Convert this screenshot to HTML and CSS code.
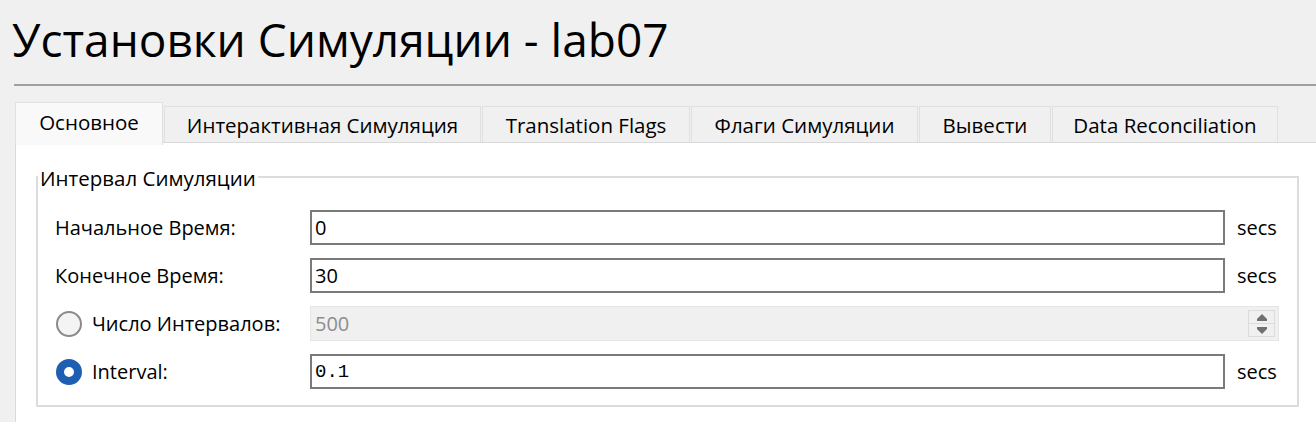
FILE: index.html
```html
<!DOCTYPE html>
<html>
<head>
<meta charset="utf-8">
<link rel="stylesheet" href="styles.css">
</head>
<body>
<div class="title">Установки Симуляции - lab07</div>
<div class="rule"></div>
<div class="tabs">
  <div class="tab active">Основное</div>
  <div class="tab w2">Интерактивная Симуляция</div>
  <div class="tab w3">Translation Flags</div>
  <div class="tab w4">Флаги Симуляции</div>
  <div class="tab w5">Вывести</div>
  <div class="tab w6">Data Reconciliation</div>
</div>
<div class="pane">
  <div class="group">
    <div class="caption">Интервал Симуляции</div>
    <div class="grid">
      <div class="label">Начальное Время:</div>
      <div class="input">0</div>
      <div class="unit">secs</div>

      <div class="label">Конечное Время:</div>
      <div class="input">30</div>
      <div class="unit">secs</div>

      <div class="label"><span class="radio"></span>Число Интервалов:</div>
      <div class="spin"><span class="spinval">500</span>
        <div class="spinbtns">
          <div class="sb"><svg width="12" height="7" viewBox="0 0 12 7"><path d="M6 0 L11 5 L11 7 L1 7 L1 5 Z" fill="#707070"/></svg></div>
          <div class="sb"><svg width="12" height="7" viewBox="0 0 12 7"><path d="M1 0 L11 0 L11 2 L6 7 L1 2 Z" fill="#707070"/></svg></div>
        </div>
      </div>

      <div class="label"><span class="radio checked"></span>Interval:</div>
      <div class="input mono">0.1</div>
      <div class="unit">secs</div>
    </div>
  </div>
</div>
</body>
</html>
```
FILE: styles.css
```css
html, body {
  margin: 0;
  padding: 0;
  background: #f0f0f0;
  font-family: "Open Sans", "Noto Sans", sans-serif;
  color: #000;
  overflow: hidden;
}
.title {
  height: 84px;
  box-sizing: border-box;
  padding: 10px 0 0 12px;
  font-size: 46px;
  line-height: 58px;
  white-space: nowrap;
}
.rule {
  margin-left: 14px;
  height: 2px;
  background: #a0a0a0;
}
.tabs {
  display: flex;
  margin-left: 15px;
  margin-top: 16px;
  height: 40px;
  align-items: flex-start;
  position: relative;
  z-index: 1;
}
.tab {
  box-sizing: border-box;
  height: 36px;
  margin-top: 4px;
  margin-right: 1px;
  background: #f0f0f0;
  border: 1px solid #e0e0e0;
  border-bottom: none;
  font-size: 20.5px;
  display: flex;
  align-items: center;
  justify-content: center;
  white-space: nowrap;
}
.tab.active {
  width: 148px;
  height: 43px;
  margin-top: 0;
  background: #f9f9f9;
  padding-bottom: 4px;
}
.w2 { width: 317px; }
.w3 { width: 208px; }
.w4 { width: 227px; }
.w5 { width: 132px; }
.w6 { width: 226px; }
.pane {
  margin-left: 15px;
  background: #fff;
  border-top: 1px solid #dadada;
  border-left: 1px solid #dadada;
  padding: 33px 17px 20px 20px;
  height: 280px;
  box-sizing: border-box;
}
.group {
  position: relative;
  border: 2px solid #dcdcdc;
  padding: 32px 18px 16px 17px;
}
.caption {
  position: absolute;
  left: 0;
  top: -13px;
  background: #fff;
  padding: 0 2px;
  font-size: 20.5px;
  line-height: 26px;
}
.grid {
  display: grid;
  grid-template-columns: 255px 1fr 54px;
  grid-auto-rows: 35px;
  row-gap: 13px;
  font-size: 20px;
}
.label {
  display: flex;
  align-items: center;
  white-space: nowrap;
}
.radio {
  box-sizing: border-box;
  width: 26px;
  height: 26px;
  border-radius: 50%;
  border: 2px solid #8a8a8a;
  background: #f4f4f4;
  margin-left: 1px;
  margin-right: 10px;
}
.radio.checked {
  border: 8.5px solid #1f5fb3;
  background: #fff;
}
.input {
  box-sizing: border-box;
  border: 2px solid #7a7a7a;
  background: #fff;
  padding-left: 3px;
  display: flex;
  align-items: center;
}
.mono {
  font-family: "Liberation Mono", monospace;
  font-size: 19px;
}
.unit {
  display: flex;
  align-items: center;
  padding-left: 12px;
}
.spin {
  grid-column: 2 / 4;
  box-sizing: border-box;
  background: #f0f0f0;
  border: 1px solid #e6e6e6;
  display: flex;
  align-items: center;
  justify-content: space-between;
  padding-left: 4px;
  padding-right: 3px;
  color: #8d8d8d;
}
.spinbtns {
  display: flex;
  flex-direction: column;
  width: 27px;
  height: 27px;
  border: 1px solid #dcdcdc;
  box-sizing: border-box;
}
.sb {
  flex: 1;
  display: flex;
  align-items: center;
  justify-content: center;
}
.sb + .sb {
  border-top: 1px solid #dcdcdc;
}
```
